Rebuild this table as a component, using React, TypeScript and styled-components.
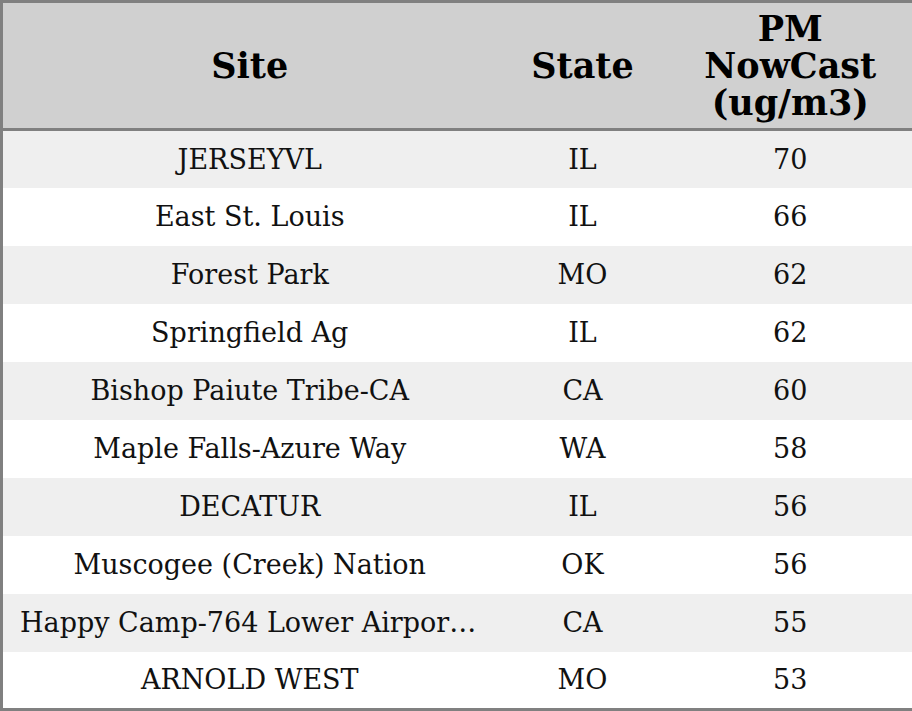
import { createGlobalStyle } from 'styled-components'
import styled from 'styled-components'

const GlobalStyle = createGlobalStyle`
  html, body {
    margin: 0;
    padding: 0;
    background: #ffffff;
  }
  body {
    font-family: 'DejaVu Serif', 'Liberation Serif', serif;
    color: #000;
  }
`

type Reading = {
  site: string
  state: string
  value: number
}

const readings: Reading[] = [
  { site: 'JERSEYVL', state: 'IL', value: 70 },
  { site: 'East St. Louis', state: 'IL', value: 66 },
  { site: 'Forest Park', state: 'MO', value: 62 },
  { site: 'Springfield Ag', state: 'IL', value: 62 },
  { site: 'Bishop Paiute Tribe-CA', state: 'CA', value: 60 },
  { site: 'Maple Falls-Azure Way', state: 'WA', value: 58 },
  { site: 'DECATUR', state: 'IL', value: 56 },
  { site: 'Muscogee (Creek) Nation', state: 'OK', value: 56 },
  { site: 'Happy Camp-764 Lower Airport Rd', state: 'CA', value: 55 },
  { site: 'ARNOLD WEST', state: 'MO', value: 53 },
]

const Table = styled.table`
  width: 912px;
  height: 711px;
  box-sizing: border-box;
  border: 3px solid #808080;
  border-collapse: collapse;
  table-layout: fixed;
`

const HeadRow = styled.tr`
  height: 128px;
  background: #d0d0d0;
  border-bottom: 3px solid #808080;
`

const HeadCell = styled.th`
  padding: 0 8px;
  font-size: 35px;
  line-height: 37px;
  font-weight: bold;
  text-align: center;
  vertical-align: middle;
`

const Row = styled.tr<{ $striped: boolean }>`
  height: 57.4px;
  background: ${({ $striped }) => ($striped ? '#efefef' : '#ffffff')};
`

const Cell = styled.td`
  padding: 0 17px;
  font-size: 27px;
  text-align: center;
  vertical-align: middle;
  white-space: nowrap;
  overflow: hidden;
  text-overflow: ellipsis;
  color: #111;
`

export default function App() {
  return (
    <>
      <GlobalStyle />
      <Table>
        <colgroup>
          <col style={{ width: 495 }} />
          <col style={{ width: 172 }} />
          <col style={{ width: 245 }} />
        </colgroup>
        <thead>
          <HeadRow>
            <HeadCell>Site</HeadCell>
            <HeadCell>State</HeadCell>
            <HeadCell>
              PM
              <br />
              NowCast
              <br />
              (ug/m3)
            </HeadCell>
          </HeadRow>
        </thead>
        <tbody>
          {readings.map((r, i) => (
            <Row key={r.site} $striped={i % 2 === 0}>
              <Cell>{r.site}</Cell>
              <Cell>{r.state}</Cell>
              <Cell>{r.value}</Cell>
            </Row>
          ))}
        </tbody>
      </Table>
    </>
  )
}
